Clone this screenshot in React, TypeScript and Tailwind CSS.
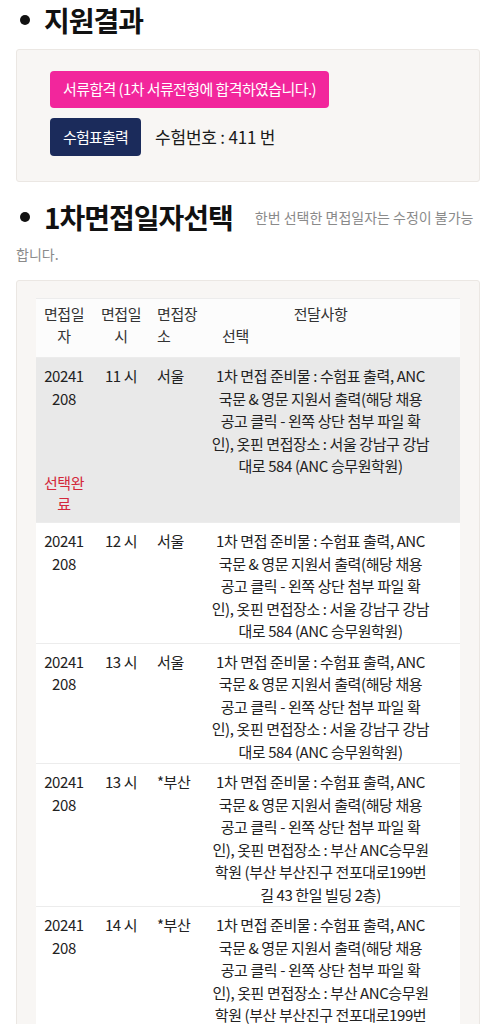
import React from 'react';

type Slot = {
  time: string;
  place: string;
  lines: string[];
  selected?: boolean;
};

const seoul = [
  '1차 면접 준비물 : 수험표 출력, ANC',
  '국문 & 영문 지원서 출력(해당 채용',
  '공고 클릭 - 왼쪽 상단 첨부 파일 확',
  '인), 옷핀 면접장소 : 서울 강남구 강남',
  '대로 584 (ANC 승무원학원)',
];

const busan = [
  '1차 면접 준비물 : 수험표 출력, ANC',
  '국문 & 영문 지원서 출력(해당 채용',
  '공고 클릭 - 왼쪽 상단 첨부 파일 확',
  '인), 옷핀 면접장소 : 부산 ANC승무원',
  '학원 (부산 부산진구 전포대로199번',
  '길 43 한일 빌딩 2층)',
];

const slots: Slot[] = [
  { time: '11 시', place: '서울', lines: seoul, selected: true },
  { time: '12 시', place: '서울', lines: seoul },
  { time: '13 시', place: '서울', lines: seoul },
  { time: '13 시', place: '*부산', lines: busan },
  { time: '14 시', place: '*부산', lines: busan },
];

function Bullet() {
  return <span className="block w-[10px] h-[10px] rounded-full bg-[#111]" />;
}

function SlotRow({ slot }: { slot: Slot }) {
  return (
    <div
      className={`grid grid-cols-[56px_58px_55px_1fr] border-t border-[#ececec] pt-[7px] leading-[22.5px] text-[15px] tracking-[-0.4px] text-[#222] ${
        slot.selected ? 'bg-[#e9e9e9]' : 'bg-white'
      }`}
    >
      <div className="text-center">
        <div>20241</div>
        <div>208</div>
        {slot.selected && (
          <div className="mt-[62px] mb-[8px] text-[#d3283b] leading-[21px]">
            선택완
            <br />
            료
          </div>
        )}
      </div>
      <div className="text-center">{slot.time}</div>
      <div className="pl-[7px]">{slot.place}</div>
      <div className="pr-[24px] text-center">
        {slot.lines.map((line, i) => (
          <div key={i} className="whitespace-nowrap">
            {line}
          </div>
        ))}
      </div>
    </div>
  );
}

export default function App() {
  return (
    <div className="w-[481px] min-h-[1024px] bg-white font-['Noto_Sans_CJK_KR','Noto_Sans',sans-serif] text-[#111] overflow-hidden">
      {/* 지원결과 */}
      <h2 className="flex items-center pt-[2px] pl-[20px] h-[38px]">
        <Bullet />
        <span className="ml-[14px] text-[28px] font-semibold tracking-[-1px] leading-[36px]">
          지원결과
        </span>
      </h2>

      <div className="mt-[11px] ml-[16px] w-[464px] rounded-[3px] border border-[#ebe7e3] bg-[#f8f6f4] pt-[21px] pb-[25px] pl-[33px]">
        <div className="inline-flex h-[37px] items-center rounded-[4px] bg-[#f2269c] px-[13px] text-[15px] tracking-[-0.6px] text-white">
          서류합격 (1차 서류전형에 합격하였습니다.)
        </div>
        <div className="mt-[10px] flex items-center">
          <div className="flex h-[38px] w-[91px] items-center justify-center rounded-[4px] bg-[#1b2b5b] text-[15px] tracking-[-0.8px] text-white">
            수험표출력
          </div>
          <div className="ml-[14px] text-[17px] tracking-[-0.2px] text-[#1a1a1a]">
            수험번호 : 411 번
          </div>
        </div>
      </div>

      {/* 1차면접일자선택 */}
      <h2 className="mt-[17px] flex items-center pl-[20px] h-[36px]">
        <Bullet />
        <span className="ml-[14px] text-[28px] font-semibold tracking-[-1px] leading-[36px]">
          1차면접일자선택
        </span>
        <span className="ml-[22px] text-[14px] text-[#8a8a8a] font-normal whitespace-nowrap">
          한번 선택한 면접일자는 수정이 불가능
        </span>
      </h2>
      <div className="mt-[9px] pl-[16px] text-[14px] leading-[20px] text-[#8a8a8a]">
        합니다.
      </div>

      <div className="mt-[16px] ml-[16px] w-[464px] rounded-t-[3px] border border-[#ebe7e3] bg-[#f8f6f4] pt-[17px] px-[19px] pb-[20px]">
        <div className="bg-white">
          <div className="grid grid-cols-[56px_58px_55px_1fr] border-t border-[#ececec] bg-[#fcfcfc] pt-[4px] pb-[10px] leading-[22px] text-[15px] tracking-[-0.4px] text-[#333]">
            <div className="text-center">
              면접일
              <br />
              자
            </div>
            <div className="text-center">
              면접일
              <br />
              시
            </div>
            <div className="pl-[7px]">
              면접장
              <br />
              소
            </div>
            <div>
              <div className="pr-[24px] text-center">전달사항</div>
              <div className="pl-[17px]">선택</div>
            </div>
          </div>
          {slots.map((slot, i) => (
            <SlotRow key={i} slot={slot} />
          ))}
        </div>
      </div>
    </div>
  );
}
